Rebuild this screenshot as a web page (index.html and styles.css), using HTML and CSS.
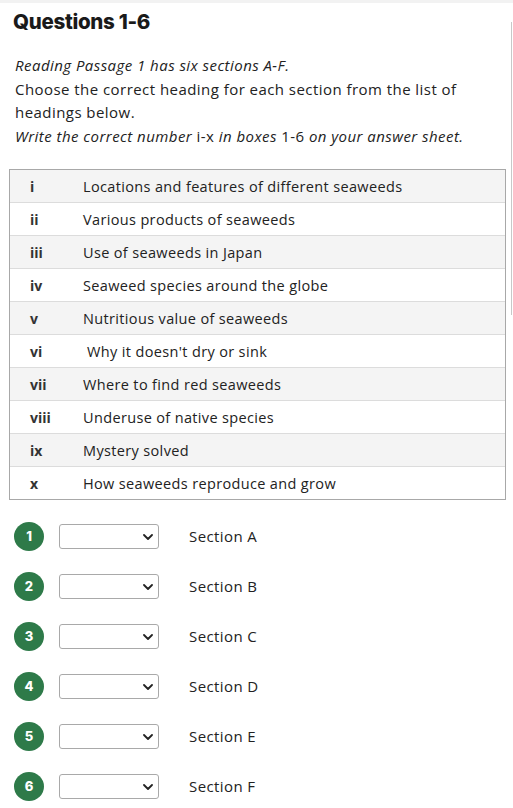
FILE: index.html
```html
<!DOCTYPE html>
<html>
<head>
<meta charset="utf-8">
<link rel="stylesheet" href="styles.css">
</head>
<body>
<div class="topbar"></div>
<div class="scrollline"></div>
<main class="page">
  <h1 class="title">Questions 1-6</h1>
  <div class="instructions">
    <p class="it">Reading Passage 1 has six sections A-F.</p>
    <p>Choose the correct heading for each section from the list of headings below.</p>
    <p><span class="it">Write the correct number</span> i-x <span class="it">in boxes</span> 1-6 <span class="it">on your answer sheet.</span></p>
  </div>
  <div class="headings">
    <div class="hrow"><span class="num">i</span><span class="txt">Locations and features of different seaweeds</span></div>
    <div class="hrow"><span class="num">ii</span><span class="txt">Various products of seaweeds</span></div>
    <div class="hrow"><span class="num">iii</span><span class="txt">Use of seaweeds in Japan</span></div>
    <div class="hrow"><span class="num">iv</span><span class="txt">Seaweed species around the globe</span></div>
    <div class="hrow"><span class="num">v</span><span class="txt">Nutritious value of seaweeds</span></div>
    <div class="hrow"><span class="num">vi</span><span class="txt">&nbsp;Why it doesn't dry or sink</span></div>
    <div class="hrow"><span class="num">vii</span><span class="txt">Where to find red seaweeds</span></div>
    <div class="hrow"><span class="num">viii</span><span class="txt">Underuse of native species</span></div>
    <div class="hrow"><span class="num">ix</span><span class="txt">Mystery solved</span></div>
    <div class="hrow"><span class="num">x</span><span class="txt">How seaweeds reproduce and grow</span></div>
  </div>
  <div class="questions">
    <div class="q"><span class="badge">1</span><div class="sel"><select><option></option></select><svg class="chev" viewBox="0 0 10 6" width="10" height="6"><path d="M1 1l4 4 4-4" fill="none" stroke="#222" stroke-width="1.8" stroke-linecap="round" stroke-linejoin="round"/></svg></div><span class="lbl">Section A</span></div>
    <div class="q"><span class="badge">2</span><div class="sel"><select><option></option></select><svg class="chev" viewBox="0 0 10 6" width="10" height="6"><path d="M1 1l4 4 4-4" fill="none" stroke="#222" stroke-width="1.8" stroke-linecap="round" stroke-linejoin="round"/></svg></div><span class="lbl">Section B</span></div>
    <div class="q"><span class="badge">3</span><div class="sel"><select><option></option></select><svg class="chev" viewBox="0 0 10 6" width="10" height="6"><path d="M1 1l4 4 4-4" fill="none" stroke="#222" stroke-width="1.8" stroke-linecap="round" stroke-linejoin="round"/></svg></div><span class="lbl">Section C</span></div>
    <div class="q"><span class="badge">4</span><div class="sel"><select><option></option></select><svg class="chev" viewBox="0 0 10 6" width="10" height="6"><path d="M1 1l4 4 4-4" fill="none" stroke="#222" stroke-width="1.8" stroke-linecap="round" stroke-linejoin="round"/></svg></div><span class="lbl">Section D</span></div>
    <div class="q"><span class="badge">5</span><div class="sel"><select><option></option></select><svg class="chev" viewBox="0 0 10 6" width="10" height="6"><path d="M1 1l4 4 4-4" fill="none" stroke="#222" stroke-width="1.8" stroke-linecap="round" stroke-linejoin="round"/></svg></div><span class="lbl">Section E</span></div>
    <div class="q"><span class="badge">6</span><div class="sel"><select><option></option></select><svg class="chev" viewBox="0 0 10 6" width="10" height="6"><path d="M1 1l4 4 4-4" fill="none" stroke="#222" stroke-width="1.8" stroke-linecap="round" stroke-linejoin="round"/></svg></div><span class="lbl">Section F</span></div>
  </div>
</main>
</body>
</html>
```

FILE: styles.css
```css
* { box-sizing: border-box; }
html, body { margin: 0; padding: 0; background: #fff; }
body {
  font-family: "Open Sans", "Noto Sans", sans-serif;
  color: #222;
  position: relative;
  min-height: 808px;
}
.topbar { height: 3px; background: #f2f2f2; }
.scrollline {
  position: absolute;
  left: 511px;
  top: 22px;
  width: 1px;
  height: 293px;
  background: #c8c8c8;
}
.page { padding: 0 8px 0 9px; }
.title {
  margin: 0;
  padding: 7px 0 0 4px;
  font-family: "Inter", "DejaVu Sans", sans-serif;
  font-weight: 800;
  font-size: 20.5px;
  line-height: 24px;
  color: #1a1a1a;
  letter-spacing: -0.3px;
}
.instructions {
  padding: 20px 0 0 6px;
  font-size: 15px;
  line-height: 23.5px;
  letter-spacing: 0.45px;
  color: #222;
  width: 480px;
}
.instructions p { margin: 0; }
.it { font-style: italic; }
.headings {
  margin-top: 21px;
  width: 497px;
  border: 1px solid #a8a8a8;
}
.hrow {
  display: flex;
  align-items: center;
  height: 33px;
  border-top: 1px solid #dcdcdc;
  font-size: 14.5px;
  letter-spacing: 0.35px;
  color: #222;
}
.hrow:first-child { border-top: none; height: 32px; }
.hrow:nth-child(odd) { background: #f4f4f4; }
.num {
  width: 73px;
  padding-left: 20px;
  font-weight: 700;
  font-size: 14px;
  letter-spacing: 0;
  color: #333;
}
.txt { flex: 1; }
.questions { padding-top: 11px; padding-left: 5px; }
.q {
  display: flex;
  align-items: center;
  height: 50px;
}
.badge {
  width: 30px;
  height: 29px;
  border-radius: 50%;
  background: #2e7a49;
  color: #fff;
  font-family: "Inter", "DejaVu Sans", sans-serif;
  font-weight: 800;
  font-size: 13px;
  display: flex;
  align-items: center;
  justify-content: center;
}
.sel {
  position: relative;
  margin-left: 15px;
  width: 100px;
  height: 25px;
}
.sel select {
  appearance: none;
  -webkit-appearance: none;
  width: 100%;
  height: 100%;
  border: 1px solid #a9a9a9;
  border-radius: 3px;
  background: #fff;
  margin: 0;
}
.chev {
  position: absolute;
  right: 6px;
  top: 10px;
  pointer-events: none;
}
.lbl {
  margin-left: 30px;
  font-size: 15px;
  letter-spacing: 0.4px;
  color: #222;
}
```
